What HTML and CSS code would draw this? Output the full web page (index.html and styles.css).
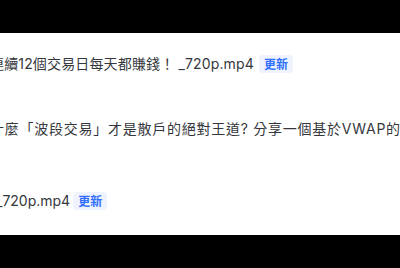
FILE: index.html
```html
<!DOCTYPE html>
<html lang="zh-Hant">
<head>
    <meta charset="UTF-8">
    <meta name="viewport" content="width=device-width, initial-scale=1.0">
    <title>檔案列表</title>
    <link rel="stylesheet" href="styles.css">
</head>
<body>
    <div class="bar"></div>
    <div class="file-list">
        <div class="file row1">
            <span class="name">連續12個交易日每天都賺錢！ _720p.mp4</span>
            <span class="tag">更新</span>
        </div>
        <div class="file row2">
            <span class="name">什麼「波段交易」才是散戶的絕對王道? 分享一個基於VWAP的波段交易策略_720p.mp4</span>
        </div>
        <div class="file row3">
            <span class="name">_720p.mp4</span>
            <span class="tag">更新</span>
        </div>
    </div>
    <div class="bar"></div>
</body>
</html>
```

FILE: styles.css
```css
body {
    margin: 0;
    padding: 0;
    width: 400px;
    height: 268px;
    overflow: hidden;
    background: #000;
    color: #35373c;
    font-family: 'Inter', 'Noto Sans CJK TC', sans-serif;
}
.bar {
    height: 33px;
    background: #000;
}
.file-list {
    height: 202px;
    background: #fff;
    overflow: hidden;
    box-sizing: border-box;
    padding-top: 19px;
}
.file {
    display: flex;
    align-items: center;
    height: 24px;
    margin-left: -10px;
    white-space: nowrap;
}
.file .name {
    font-size: 14px;
    line-height: 20px;
}
.row1 .name {
    letter-spacing: 0.15px;
}
.row2 {
    margin-top: 41px;
}
.row2 .name {
    letter-spacing: 0.75px;
}
.row3 {
    margin-top: 48px;
    margin-left: -4px;
}
.tag {
    margin-left: 5px;
    padding: 0 5px;
    height: 18px;
    line-height: 18px;
    border-radius: 4px;
    background: #eef3fe;
    color: #3370ff;
    font-size: 12px;
    font-weight: 600;
    font-family: 'Noto Sans CJK TC', sans-serif;
}
.row3 .tag {
    margin-left: 3px;
}
```
